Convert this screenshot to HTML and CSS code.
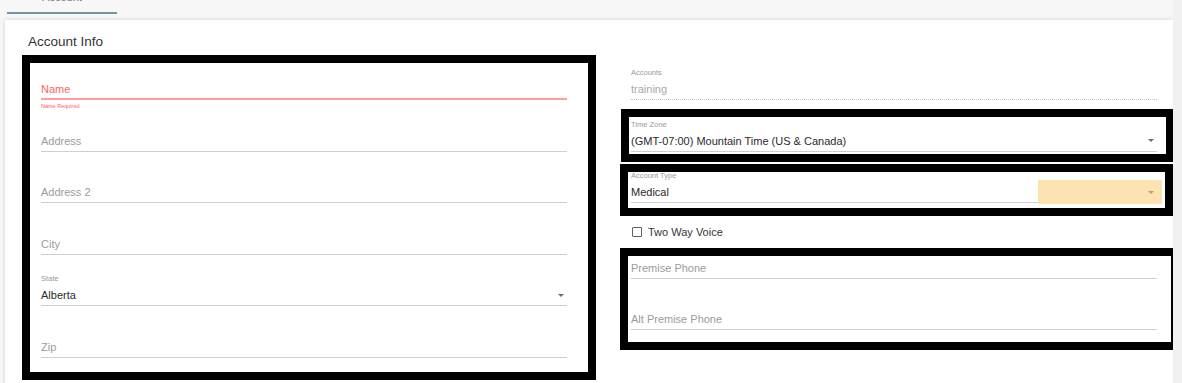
FILE: index.html
```html
<!DOCTYPE html>
<html lang="en">
<head>
    <meta charset="UTF-8">
    <title>Account</title>
    <link rel="stylesheet" href="styles.css">
</head>
<body>
    <div class="page">
        <div class="tabs">
            <div class="tab">Account</div>
        </div>

        <div class="card">
            <h2 class="card-title">Account Info</h2>

            <div class="cols">
                <!-- left column -->
                <div class="col">
                    <div class="field invalid">
                        <div class="field-label"></div>
                        <div class="field-control"><span class="placeholder">Name</span></div>
                        <div class="field-helper">Name Required</div>
                    </div>
                    <div class="field">
                        <div class="field-label"></div>
                        <div class="field-control"><span class="placeholder">Address</span></div>
                    </div>
                    <div class="field">
                        <div class="field-label"></div>
                        <div class="field-control"><span class="placeholder">Address 2</span></div>
                    </div>
                    <div class="field">
                        <div class="field-label"></div>
                        <div class="field-control"><span class="placeholder">City</span></div>
                    </div>
                    <div class="field">
                        <div class="field-label">State</div>
                        <div class="field-control"><span class="value">Alberta</span><span class="caret"></span></div>
                    </div>
                    <div class="field">
                        <div class="field-label"></div>
                        <div class="field-control"><span class="placeholder">Zip</span></div>
                    </div>
                </div>

                <!-- right column -->
                <div class="col">
                    <div class="field disabled">
                        <div class="field-label">Accounts</div>
                        <div class="field-control"><span class="value">training</span></div>
                    </div>
                    <div class="field">
                        <div class="field-label">Time Zone</div>
                        <div class="field-control"><span class="value">(GMT-07:00) Mountain Time (US &amp; Canada)</span><span class="caret"></span></div>
                    </div>
                    <div class="field">
                        <div class="field-label">Account Type</div>
                        <div class="field-control"><span class="value">Medical</span><span class="caret-zone"><span class="caret light"></span></span></div>
                    </div>
                    <label class="check-row">
                        <span class="checkbox"></span>
                        <span>Two Way Voice</span>
                    </label>
                    <div class="field">
                        <div class="field-label"></div>
                        <div class="field-control"><span class="placeholder">Premise Phone</span></div>
                    </div>
                    <div class="field">
                        <div class="field-label"></div>
                        <div class="field-control"><span class="placeholder">Alt Premise Phone</span></div>
                    </div>
                </div>
            </div>
        </div>

        <!-- review markers drawn over the form -->
        <div class="marker marker-left"></div>
        <div class="marker marker-tz"></div>
        <div class="marker marker-type"></div>
        <div class="marker marker-phone"></div>
    </div>
</body>
</html>
```

FILE: styles.css
```css
* {
    margin: 0;
    padding: 0;
    box-sizing: border-box;
}

body {
    background-color: #f7f7f7;
    font-family: "Liberation Sans", Arial, sans-serif;
    color: #333;
    overflow: hidden;
}

.page {
    position: relative;
    height: 383px;
    overflow: hidden;
    border-right: 9px solid #f1f1f1;
}

/* Tabs */
.tabs {
    display: flex;
    height: 20px;
    padding-left: 7px;
}

.tab {
    width: 110px;
    height: 24px;
    margin-top: -10px;
    line-height: 14px;
    font-size: 11px;
    color: #777;
    text-align: center;
    border-bottom: 2px solid #7393a5;
}

/* Card */
.card {
    margin-left: 5px;
    height: 400px;
    background-color: #fff;
    box-shadow: 0 0 4px rgba(0, 0, 0, 0.18);
    padding: 13px 0 0 36px;
}

.card-title {
    margin-left: -13px;
    font-size: 13.5px;
    font-weight: normal;
    line-height: 18px;
    color: #333;
}

.cols {
    display: grid;
    grid-template-columns: 526px 526px;
    column-gap: 64px;
    margin-top: 16px;
}

/* Fields */
.field {
    margin-bottom: 18.6px;
}

.field-label {
    height: 12px;
    font-size: 7.5px;
    line-height: 12px;
    color: #9a9a9a;
}

.field-control {
    display: flex;
    align-items: center;
    justify-content: space-between;
    height: 21px;
    font-size: 11px;
    border-bottom: 1px solid #cfcfcf;
}

.placeholder {
    color: #9b9b9b;
}

.value {
    color: #2a2a2a;
}

.caret {
    width: 0;
    height: 0;
    margin-right: 3px;
    border-left: 3.5px solid transparent;
    border-right: 3.5px solid transparent;
    border-top: 3.5px solid #6c6c6c;
}

.caret.light {
    border-top-color: #b9a27d;
}

.caret-zone {
    display: flex;
    align-items: center;
    justify-content: flex-end;
    width: 124px;
    height: 24px;
    margin-right: -5px;
    padding-right: 5px;
    background-color: #fde3b0;
}

.field-helper {
    height: 0;
    font-size: 5.5px;
    line-height: 12px;
    color: #ff5a5a;
}

.invalid .placeholder {
    color: #ff5f5f;
}

.invalid .field-control {
    border-bottom: 2px solid #ff9d9d;
}

.disabled .value {
    color: #a8a8a8;
}

.disabled .field-control {
    border-bottom: 1px dotted #c4c4c4;
}

/* Checkbox */
.check-row {
    display: flex;
    align-items: center;
    gap: 6px;
    height: 20px;
    margin-top: 1.4px;
    margin-bottom: 4px;
    padding-left: 1px;
    font-size: 11px;
    color: #333;
}

.checkbox {
    width: 10px;
    height: 10px;
    border: 1px solid #606060;
    border-radius: 1px;
}

/* Black review markers */
.marker {
    position: absolute;
    border: 8px solid #000;
}

.marker-left {
    left: 22px;
    top: 55px;
    width: 574px;
    height: 325px;
}

.marker-tz {
    left: 621px;
    top: 109px;
    width: 553px;
    height: 53px;
}

.marker-type {
    left: 620px;
    top: 164px;
    width: 553px;
    height: 52px;
}

.marker-phone {
    left: 620px;
    top: 248px;
    width: 559px;
    height: 102px;
}
```
